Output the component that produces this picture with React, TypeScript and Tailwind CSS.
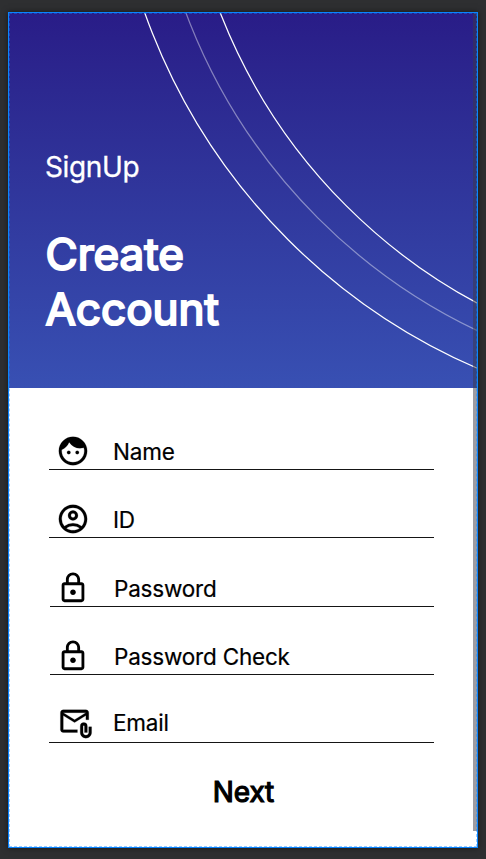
import type { IconType } from "react-icons";
import { MdFace, MdOutlineAccountCircle, MdOutlineAttachEmail, MdOutlineLock } from "react-icons/md";

type Field = { label: string; Icon: IconType; row: string; text: string; icon: string };

const fields: Field[] = [
  { label: "Name", Icon: MdFace, row: "ml-10 w-[385px] h-[82px]", text: "ml-[23px] mb-0.5", icon: "ml-[7px] [stroke-width:0.15px]" },
  { label: "ID", Icon: MdOutlineAccountCircle, row: "ml-10 w-[385px] h-[68px]", text: "ml-[23px] mb-0.5", icon: "ml-[7px] [stroke-width:0.15px]" },
  { label: "Password", Icon: MdOutlineLock, row: "ml-[41px] w-[384px] h-[69px]", text: "ml-[24px] mb-0.5", icon: "ml-[6px] [stroke-width:0px]" },
  { label: "Password Check", Icon: MdOutlineLock, row: "ml-[41px] w-[384px] h-[68px]", text: "ml-[24px] mb-0.5", icon: "ml-[6px] [stroke-width:0px]" },
  { label: "Email", Icon: MdOutlineAttachEmail, row: "ml-10 w-[385px] h-[68px]", text: "ml-[20px] mb-1", icon: "ml-[10px] [stroke-width:0.15px]" },
];

function Arcs() {
  return (
    <svg className="absolute inset-0" width="468" height="375" viewBox="9 13 468 375" fill="none" stroke="white">
      <circle cx="719.4" cy="-191.5" r="609.9" strokeWidth="1.25" />
      <circle cx="725.1" cy="-189" r="575.7" strokeWidth="1.25" opacity="0.42" />
      <circle cx="742.1" cy="-190.3" r="560" strokeWidth="1.25" />
    </svg>
  );
}

export default function App() {
  return (
    <div className="h-[859px] w-[486px] overflow-hidden bg-[#2e2f31] pt-3 pl-2 font-['Inter',sans-serif]">
      <main className="relative h-[836px] w-[470px] border border-[#0a84ff] bg-white shadow-[0_0_6px_rgba(0,0,0,0.5)]">
        <header className="relative h-[375px] overflow-hidden bg-linear-to-b from-[#291c87] to-[#3850b3] pt-[137px] pl-9 text-white">
          <Arcs />
          <p className="relative text-[28px] leading-[34px] tracking-[-0.35px] [-webkit-text-stroke:0.3px_white]">SignUp</p>
          <h1 className="relative mt-[43px] ml-[0.5px] text-[44px] leading-[54.5px] font-normal [-webkit-text-stroke:2.1px_white]">
            Create
            <br />
            Account
          </h1>
        </header>
        <form>
          {fields.map(({ label, Icon, row, text, icon }) => (
            <div key={label} className={`flex items-end border-b border-[#151515] text-black ${row}`}>
              <Icon className={`mb-px size-[34px] shrink-0 [&_path:first-child]:stroke-none ${icon}`} />
              <span className={`text-[22.5px] leading-[30px] tracking-[-0.2px] [-webkit-text-stroke:0.2px_black] ${text}`}>{label}</span>
            </div>
          ))}
          <button type="button" className="mt-[31px] block w-[468px] pl-px text-center text-[28px] leading-[36px] font-normal tracking-[-0.1px] text-black [-webkit-text-stroke:1.2px_black]">
            Next
          </button>
        </form>
        <div className="absolute top-0 right-0 h-[818px] w-1 bg-[rgb(60,58,70)]/50" />
        <div className="pointer-events-none absolute inset-0 border border-dashed border-[#0a84ff]/40" />
      </main>
    </div>
  );
}
